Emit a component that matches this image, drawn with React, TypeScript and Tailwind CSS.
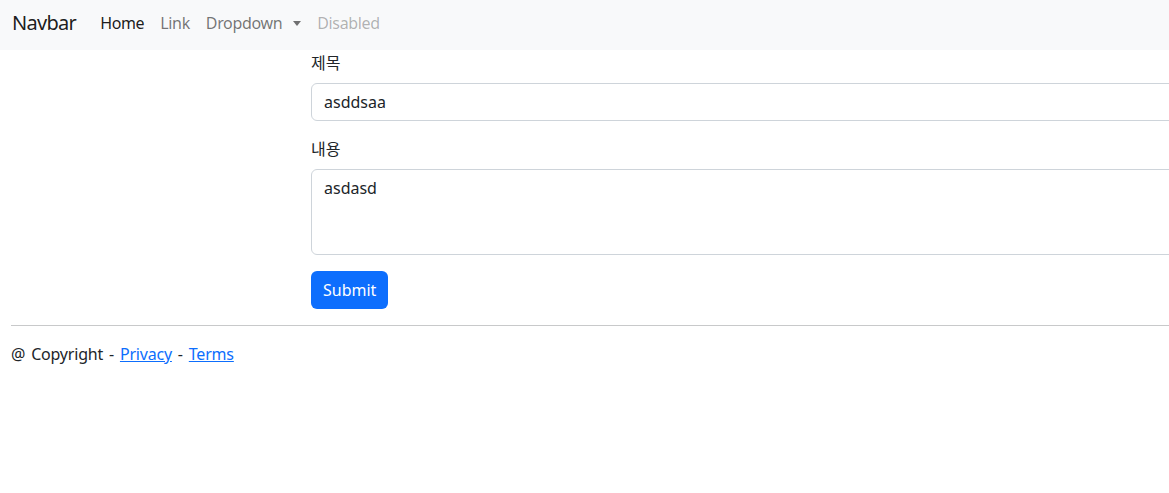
export default function App() {
  return (
    <div
      className="min-h-screen w-full overflow-hidden bg-white text-[16px] leading-6 text-[#212529]"
      style={{ fontFamily: '"Noto Sans", "Noto Sans CJK KR", sans-serif' }}
    >
      <nav className="flex h-[50px] items-center bg-[#f8f9fa] px-3 pb-1">
        <a className="mr-4 text-[20px] leading-[30px] tracking-[-0.7px] text-black/90">Navbar</a>
        <ul className="flex items-center tracking-[-0.35px]">
          <li className="px-2 text-black/90">Home</li>
          <li className="px-2 text-black/55">Link</li>
          <li className="flex items-center px-2 text-black/55">
            Dropdown
            <span className="ml-[11px] inline-block border-x-[4.5px] border-t-[5px] border-x-transparent border-t-black/55" />
          </li>
          <li className="px-2 text-black/30">Disabled</li>
        </ul>
      </nav>

      <div className="px-[11px] pt-px">
        <form className="ml-[300px] w-[1100px]">
          <div className="mb-4">
            <label className="mb-2 block">제목</label>
            <input
              className="block h-[38px] w-full rounded-md border border-[#ced4da] px-3 text-[#212529] outline-none"
              defaultValue="asddsaa"
            />
          </div>
          <div className="mb-4">
            <label className="mb-2 block">내용</label>
            <textarea
              className="block h-[86px] w-full resize-none rounded-md border border-[#ced4da] px-3 py-[6px] text-[#212529] outline-none"
              defaultValue="asdasd"
            />
          </div>
          <button
            type="button"
            className="h-[38px] rounded-md bg-[#0d6efd] px-3 text-white"
          >
            Submit
          </button>
        </form>

        <hr className="my-4 w-[1200px] border-t border-[#c8c9ca]" />

        <footer className="tracking-[-0.2px] [word-spacing:2px]">
          @ Copyright -{' '}
          <a className="text-[#0d6efd] underline">Privacy</a> -{' '}
          <a className="text-[#0d6efd] underline">Terms</a>
        </footer>
      </div>
    </div>
  );
}
